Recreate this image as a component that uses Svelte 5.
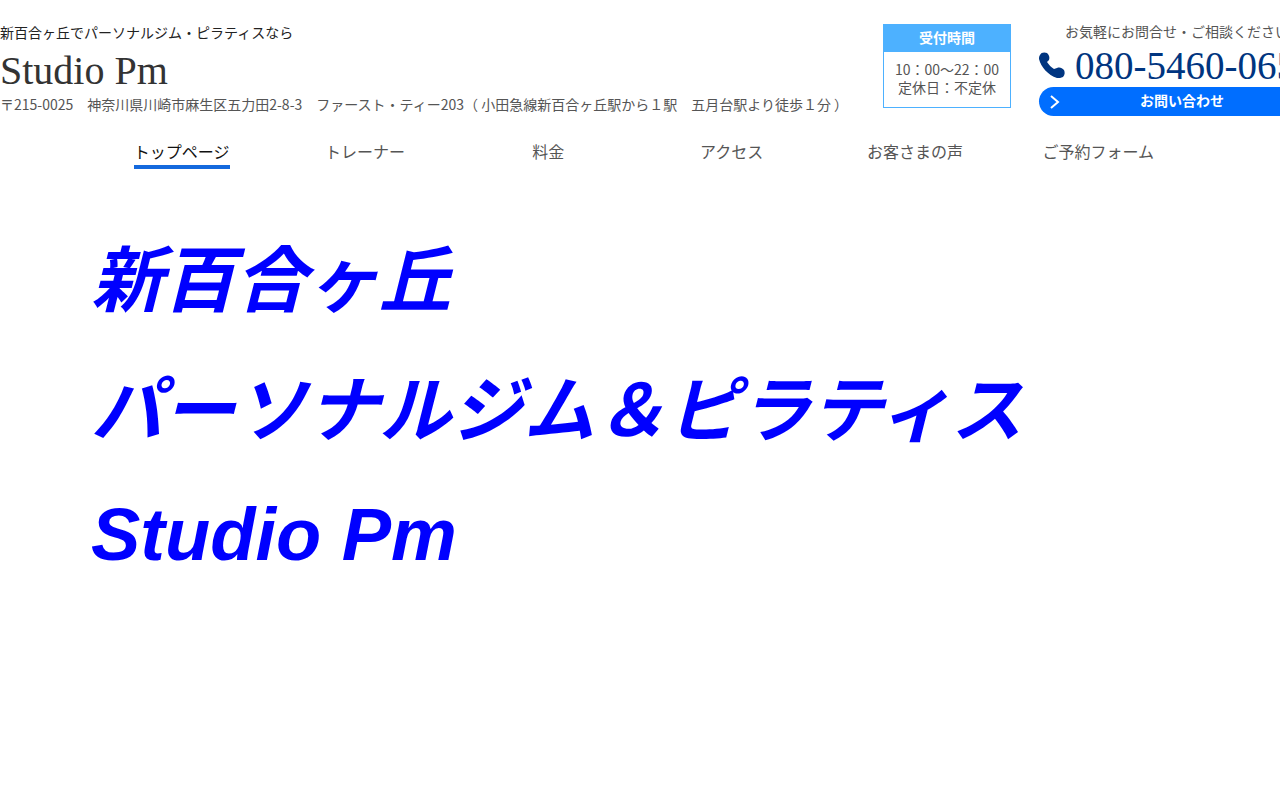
<script>
	let currentPage = 'top';

	const pages = [
		{ id: 'top', name: 'トップページ' },
		{ id: 'trainer', name: 'トレーナー' },
		{ id: 'price', name: '料金' },
		{ id: 'access', name: 'アクセス' },
		{ id: 'voice', name: 'お客さまの声' },
		{ id: 'reserve', name: 'ご予約フォーム' }
	];
</script>

<div class="page">
	<header>
		<div class="site">
			<p class="lead">新百合ヶ丘でパーソナルジム・ピラティスなら</p>
			<a class="site-name" href="#top">Studio Pm</a>
			<p class="address">
				〒215-0025　神奈川県川崎市麻生区五力田2-8-3　ファースト・ティー203（ 小田急線新百合ヶ丘駅から１駅　五月台駅より徒歩１分 ）
			</p>
		</div>
		<div class="hours">
			<h2>受付時間</h2>
			<p>10：00～22：00<br />定休日：不定休</p>
		</div>
		<div class="contact">
			<p>お気軽にお問合せ・ご相談ください</p>
			<a class="tel" href="tel:080-5460-0653">
				<svg viewBox="0 0 27 27" width="27" height="27" aria-hidden="true">
					<path
						d="M1 3C2 0 6 0 8 1c2 2 3 4 2 7L8 10c2 3 4 5 7 7l3-1c3-1 5 0 7 2 1 2 1 5-1 7-2 1-4 1-6 1C9 23 2 15 0 7c0-1 0-3 1-4Z"
					/>
				</svg>
				080-5460-0653
			</a>
			<a class="inquiry" href="#contact">
				<svg viewBox="0 0 10 16" width="10" height="16" aria-hidden="true">
					<path d="m1 2 7 6-7 6" />
				</svg>
				<span>お問い合わせ</span>
			</a>
		</div>
	</header>

	<nav>
		{#each pages as page}
			<a
				href={'#' + page.id}
				class={page.id == currentPage ? 'current' : ''}
				on:click={() => (currentPage = page.id)}
			>
				<span>{page.name}</span>
			</a>
		{/each}
	</nav>

	<main>
		<h1>
			<span>新百合ヶ丘</span>
			<span>パーソナルジム＆ピラティス</span>
			<span class="studio">Studio Pm</span>
		</h1>
	</main>
</div>

<style>
	:global(body) {
		margin: 0;
		overflow-x: hidden;
		background: #fff;
	}

	.page {
		font-family: 'Noto Sans CJK JP', sans-serif;
		color: #555;
	}

	p,
	h1,
	h2 {
		margin: 0;
	}

	a {
		color: inherit;
		text-decoration: none;
	}

	header {
		display: flex;
		padding-top: 24px;
		white-space: nowrap;
	}

	.site {
		flex: 1 0 883px;
	}

	.lead {
		font-size: 14px;
		line-height: 16px;
		color: #222;
	}

	.site-name {
		display: block;
		padding-top: 6px;
		font-family: 'Liberation Serif', serif;
		font-size: 40px;
		line-height: 50px;
		color: #333;
	}

	.address {
		font-size: 14px;
		line-height: 16px;
	}

	.hours {
		flex: none;
		box-sizing: border-box;
		width: 128px;
		height: 84px;
		border: 1px solid #4db1ff;
		text-align: center;
		font-size: 14px;
		line-height: 18px;
	}

	.hours h2 {
		padding-bottom: 2px;
		background: #4db1ff;
		color: #fff;
		font-size: 14px;
		line-height: 25px;
	}

	.hours p {
		padding-top: 8px;
	}

	.contact {
		flex: none;
		width: 286px;
		margin-left: 28px;
	}

	.contact p {
		padding-right: 10px;
		text-align: center;
		font-size: 14px;
		line-height: 14px;
	}

	.tel {
		display: flex;
		align-items: center;
		gap: 9px;
		padding-top: 6px;
		font-family: 'Liberation Serif', serif;
		font-size: 39px;
		line-height: 43px;
		color: #003580;
	}

	.tel svg {
		fill: #003580;
	}

	.inquiry {
		display: flex;
		align-items: center;
		height: 29px;
		padding: 0 11px;
		border-radius: 15px;
		background: #006eff;
		color: #fff;
		font-size: 14px;
		font-weight: bold;
		line-height: 26px;
	}

	.inquiry span {
		flex: 1;
		height: 29px;
		padding-right: 10px;
		text-align: center;
	}

	.inquiry svg {
		fill: none;
		stroke: #fff;
		stroke-width: 2;
	}

	nav {
		display: flex;
		padding: 24px 90px 0;
		font-size: 16px;
		line-height: 22px;
	}

	nav a {
		flex: 1;
		text-align: center;
	}

	nav span {
		display: inline-block;
	}

	.current span {
		padding-bottom: 3px;
		border-bottom: 4px solid #1469dd;
		color: #111;
	}

	main {
		padding: 41px 91px;
	}

	h1 {
		color: #00f;
		font-size: 72px;
		font-style: italic;
		line-height: 130px;
	}

	h1 span {
		display: block;
	}

	h1 .studio {
		font-family: 'Liberation Sans', sans-serif;
		font-size: 74px;
	}
</style>
